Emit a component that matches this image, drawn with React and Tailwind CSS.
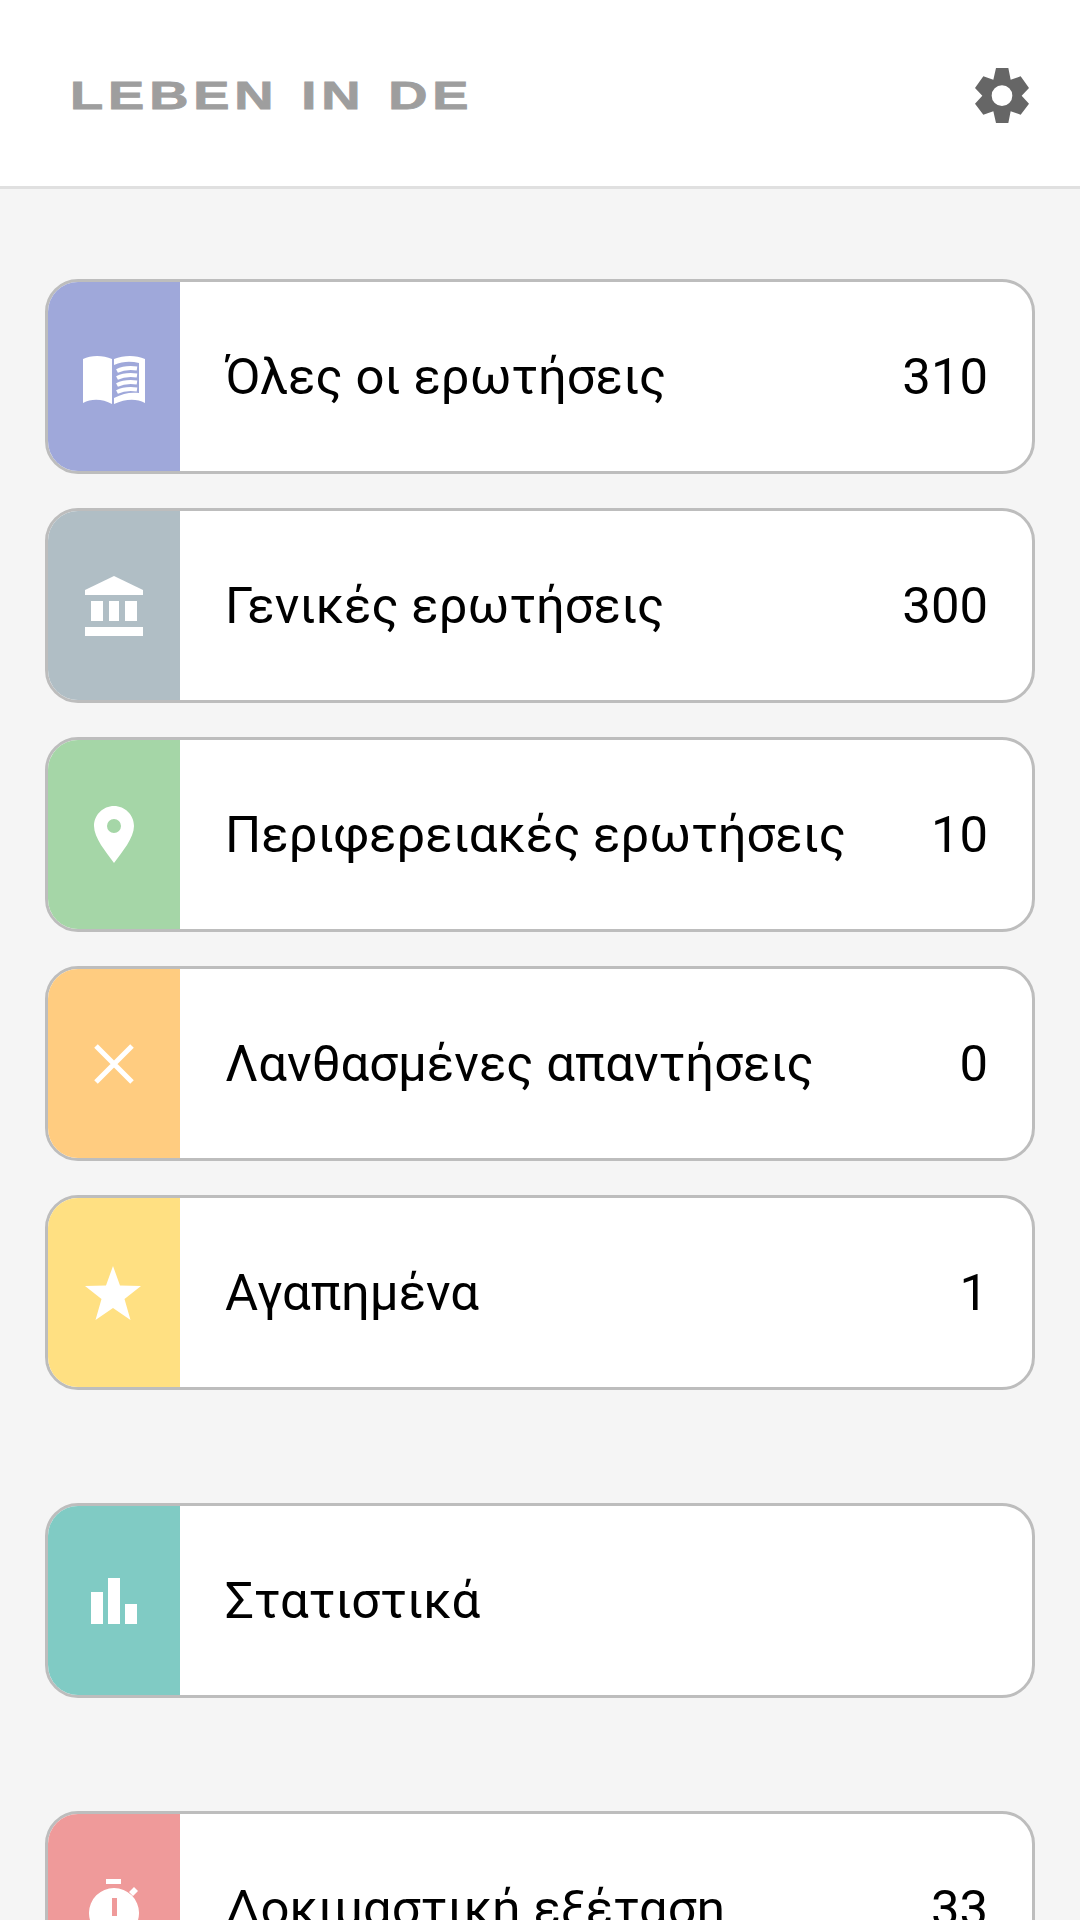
const Book = () => (
  <svg width="62" height="49" viewBox="0 0 62 49" className="block translate-y-[3px]">
    <path fill="#fff" d="M0 4C8 0 20 0 29 4V49C20 44 9 43 0 48Z" />
    <path fill="#fff" fillRule="evenodd" d="M31 4C41 0 53 0 62 4V48C53 43 42 44 31 49V43C40 38 48 37 56 38V8C48 6 40 6 31 10Z" />
    <path stroke="#fff" strokeWidth="4" fill="none" d="M34 16C40 13 47 12.500 54 13.500M34 23C40 20 47 19.500 54 20.500M34 30C40 27 47 26.500 54 27.500M34 37C40 34 47 33.500 54 34.500" />
  </svg>
);

const Bank = () => (
  <svg width="58" height="60" viewBox="0 0 58 60" className="block">
    <path fill="#fff" d="M29 0L58 14V19H0V14Z" />
    <path fill="#fff" d="M6 25H18V45H6ZM24 25H34V45H24ZM40 25H52V45H40ZM0 51H58V60H0Z" />
  </svg>
);

const Pin = () => (
  <svg width="40" height="57" viewBox="0 0 40 57" className="block">
    <path fill="#fff" fillRule="evenodd" d="M20 0C31 0 40 9 40 20C40 32 28 46 20 57C12 46 0 32 0 20C0 9 9 0 20 0ZM20 13A7 7 0 1 0 20 27A7 7 0 1 0 20 13Z" />
  </svg>
);

const Cross = () => (
  <svg width="40" height="40" viewBox="0 0 40 40" className="block">
    <path stroke="#fff" strokeWidth="5" fill="none" d="M2 2L38 38M38 2L2 38" />
  </svg>
);

const Star = () => (
  <svg width="56" height="54" viewBox="0 0 56 54" className="block -translate-x-[1px]">
    <path fill="#fff" d="M28 0L35 19.500L56 20L39.500 33L45.500 54L28 42L10.500 54L16.500 33L0 20L21 19.500Z" />
  </svg>
);

const Bars = () => (
  <svg width="46" height="46" viewBox="0 0 46 46" className="block">
    <path fill="#fff" d="M0 14H12V46H0ZM17 0H29V46H17ZM34 26H46V46H34Z" />
  </svg>
);

const Watch = () => (
  <svg width="50" height="60" viewBox="0 0 50 60" className="block">
    <path fill="#fff" d="M17 0H32V5H17ZM40 13L45 8L49 12L44 17Z" />
    <path fill="#fff" fillRule="evenodd" d="M25 9A25 25 0 1 1 25 59A25 25 0 1 1 25 9ZM23 19V37H28V19Z" />
  </svg>
);

const Gear = () => (
  <svg width="54" height="55" viewBox="0 0 162 165" className="block">
    <path
      fill="#666666"
      fillRule="evenodd"
      d="M63 0H100L107 35L137 25L162 60L140 83L162 107L137 140L107 130L100 165H63L55 130L25 140L0 107L22 83L0 60L25 25L55 35ZM81 52A31 31 0 1 0 81 114A31 31 0 1 0 81 52Z"
    />
  </svg>
);

const Row = ({ color, icon, label, count }) => (
  <div className="flex h-[195px] overflow-hidden rounded-[33px] border-[3px] border-[#bdbdbd] bg-white">
    <div className={`flex w-[132px] shrink-0 items-center justify-center ${color}`}>{icon}</div>
    <div className="flex flex-1 items-center justify-between pl-[45px] pr-[44px] pt-[1px] text-[50.8px] leading-none text-black">
      <span>{label}</span>
      {count && <span>{count}</span>}
    </div>
  </div>
);

export default function App() {
  return (
    <div className="h-[1920px] overflow-hidden bg-[#f5f5f5] font-['Roboto',sans-serif]">
      <header className="flex h-[189px] items-center justify-between border-b-[3px] border-[#e0e0e0] bg-white pl-[70px] pr-[51px] pt-[5px]">
        <span className="origin-left scale-x-[1.43] font-['Liberation_Sans',sans-serif] text-[38px] font-bold leading-none tracking-[3.4px] text-[#9e9e9e] [word-spacing:2px] [-webkit-text-stroke:0.8px_#9e9e9e]">
          LEBEN IN DE
        </span>
        <Gear />
      </header>
      <main className="flex flex-col gap-[113px] px-[45px] pt-[90px]">
        <section className="flex flex-col gap-[34px]">
          <Row color="bg-[#9fa8da]" icon={<Book />} label="Όλες οι ερωτήσεις" count="310" />
          <Row color="bg-[#b0bec5]" icon={<Bank />} label="Γενικές ερωτήσεις" count="300" />
          <Row color="bg-[#a5d6a7]" icon={<Pin />} label="Περιφερειακές ερωτήσεις" count="10" />
          <Row color="bg-[#ffcc80]" icon={<Cross />} label="Λανθασμένες απαντήσεις" count="0" />
          <Row color="bg-[#ffe082]" icon={<Star />} label="Αγαπημένα" count="1" />
        </section>
        <section>
          <Row color="bg-[#80cbc4]" icon={<Bars />} label="Στατιστικά" />
        </section>
        <section>
          <Row color="bg-[#ef9a9a]" icon={<Watch />} label="Δοκιμαστική εξέταση" count="33" />
        </section>
      </main>
    </div>
  );
}
